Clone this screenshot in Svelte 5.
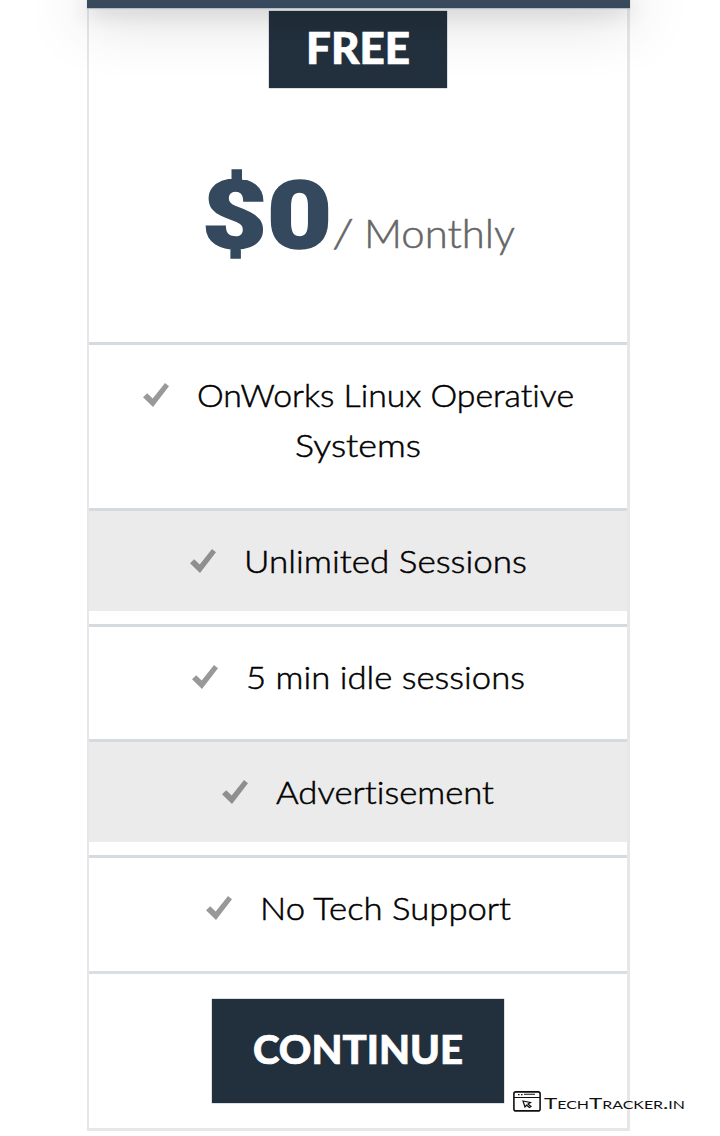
<script>
  const features = [
    { lines: [{ text: 'OnWorks Linux Operative', width: 377 }, { text: 'Systems', width: 126 }] },
    { lines: [{ text: 'Unlimited Sessions', width: 283 }], shaded: true },
    { lines: [{ text: '5 min idle sessions', width: 279 }] },
    { lines: [{ text: 'Advertisement', width: 218 }], shaded: true },
    { lines: [{ text: 'No Tech Support', width: 251 }] }
  ];
</script>

{#snippet label(text, width, height, baseline)}
  <svg class="label" {width} {height}>
    <text x="0" y={baseline} textLength={width} lengthAdjust="spacingAndGlyphs">{text}</text>
  </svg>
{/snippet}

<main>
  <div class="topbar"></div>
  <section class="card">
    <h2 class="plan">{@render label('FREE', 104, 50, 39)}</h2>
    <div class="price">
      <div class="amount">{@render label('$0', 130, 100, 84)}</div>
      <div class="period">
        {@render label('/', 22, 100, 84)}
        {@render label('Monthly', 151, 100, 84)}
      </div>
    </div>
    <ul>
      {#each features as feature}
        <li class:shaded={feature.shaded}>
          {#each feature.lines as line, i}
            <div class="line">
              {#if i === 0}
                <svg class="check" width="26" height="24" viewBox="0 0 26 24">
                  <path d="M0 14.3 4.2 10.3 9.7 15.5 22 0 26 3.3 10 24Z" />
                </svg>
              {/if}
              {@render label(line.text, line.width, 50, 37)}
            </div>
          {/each}
        </li>
      {/each}
    </ul>
    <div class="action"><button>{@render label('CONTINUE', 210, 50, 38)}</button></div>
  </section>
  <div class="brand">
    <svg width="28" height="21" viewBox="0 0 28 21" fill="none" stroke="#111">
      <rect x=".9" y=".9" width="26.2" height="19" rx="2" stroke-width="1.6" />
      <path d="M1 6.5H27" stroke-width="1" />
      <path d="M5 3.6H6.5M8 3.6H9.5M11 3.3H22" stroke-width="1.1" />
      <path d="M10 10 17.5 11.5 15 13 18 15.5 16.5 16.5 13.5 14.2 12 16Z" stroke-width="1.2" />
    </svg>
    {@render label('TechTracker.in', 141, 21, 17.5)}
  </div>
</main>

<style>
  :global(body) { margin: 0; background: #fff; }
  main {
    position: relative;
    width: 720px;
    height: 1136px;
    overflow: hidden;
    font-family: Lato, "Open Sans", sans-serif;
    font-variant-ligatures: none;
  }
  .label { display: block; overflow: visible; fill: currentColor; }
  .topbar {
    position: relative;
    width: 543px;
    height: 8px;
    margin-left: 87px;
    background: linear-gradient(#3a4a5b, #34495e);
    box-shadow: 0 1px 1px #b9bdc2, 0 0 60px 2px rgba(0, 0, 0, .45), 0 4px 20px rgba(0, 0, 0, .2);
  }
  .card {
    box-sizing: border-box;
    width: 543px;
    height: 1123px;
    margin-left: 87px;
    border: solid #e6e7e8;
    border-width: 0 3px 3px 2px;
    display: flex;
    flex-direction: column;
    align-items: center;
  }
  .plan {
    position: relative;
    margin: 3px 0 0;
    width: 178px;
    height: 77px;
    display: flex;
    justify-content: center;
    padding-top: 14px;
    box-sizing: border-box;
    background: linear-gradient(#1e2a35, #22303e 50%);
    box-shadow: 0 0 1px #34495e;
    color: #fff;
    font-size: 44px;
    font-weight: 900;
  }
  .plan .label, button .label { stroke: currentColor; stroke-width: .7px; }
  .price {
    height: 178.4px;
    margin-top: 76px;
    display: flex;
  }
  .amount { color: #34495e; font: 900 95px Roboto, sans-serif; }
  .amount .label { stroke: currentColor; stroke-width: 1.5px; }
  .period {
    display: flex;
    gap: 10px;
    color: #666;
    font-size: 39px;
    font-weight: 300;
  }
  .period .label { stroke: currentColor; stroke-width: .5px; }
  ul { align-self: stretch; margin: 0; padding: 0; list-style: none; }
  li {
    box-sizing: border-box;
    height: 103px;
    margin-bottom: 12.7px;
    padding-top: 25px;
    border-top: 3px solid #d5dadf;
    color: #000;
    font-size: 32px;
    font-weight: 300;
  }
  li:first-child { height: 153px; }
  li.shaded { background: #ebebeb; }
  .line { height: 50px; display: flex; align-items: center; justify-content: center; }
  .line .label { stroke: currentColor; stroke-width: .5px; }
  .check { margin: 0 28px 0 0; fill: #999; }
  .shaded .check { fill: #8f8f8f; }
  .action {
    align-self: stretch;
    display: flex;
    justify-content: center;
    padding-top: 25px;
    border-top: 3px solid #d8dee1;
  }
  button {
    width: 292px;
    height: 104px;
    padding: 0;
    border: 0;
    display: flex;
    align-items: center;
    justify-content: center;
    background: #22303e;
    box-shadow: 0 0 1px #34495e;
    color: #fff;
    font: 900 40px Lato, sans-serif;
  }
  .brand {
    position: absolute;
    left: 513px;
    top: 1091px;
    display: flex;
    gap: 3px;
    color: #111;
    font-size: 15.5px;
    font-variant: small-caps;
  }
</style>
